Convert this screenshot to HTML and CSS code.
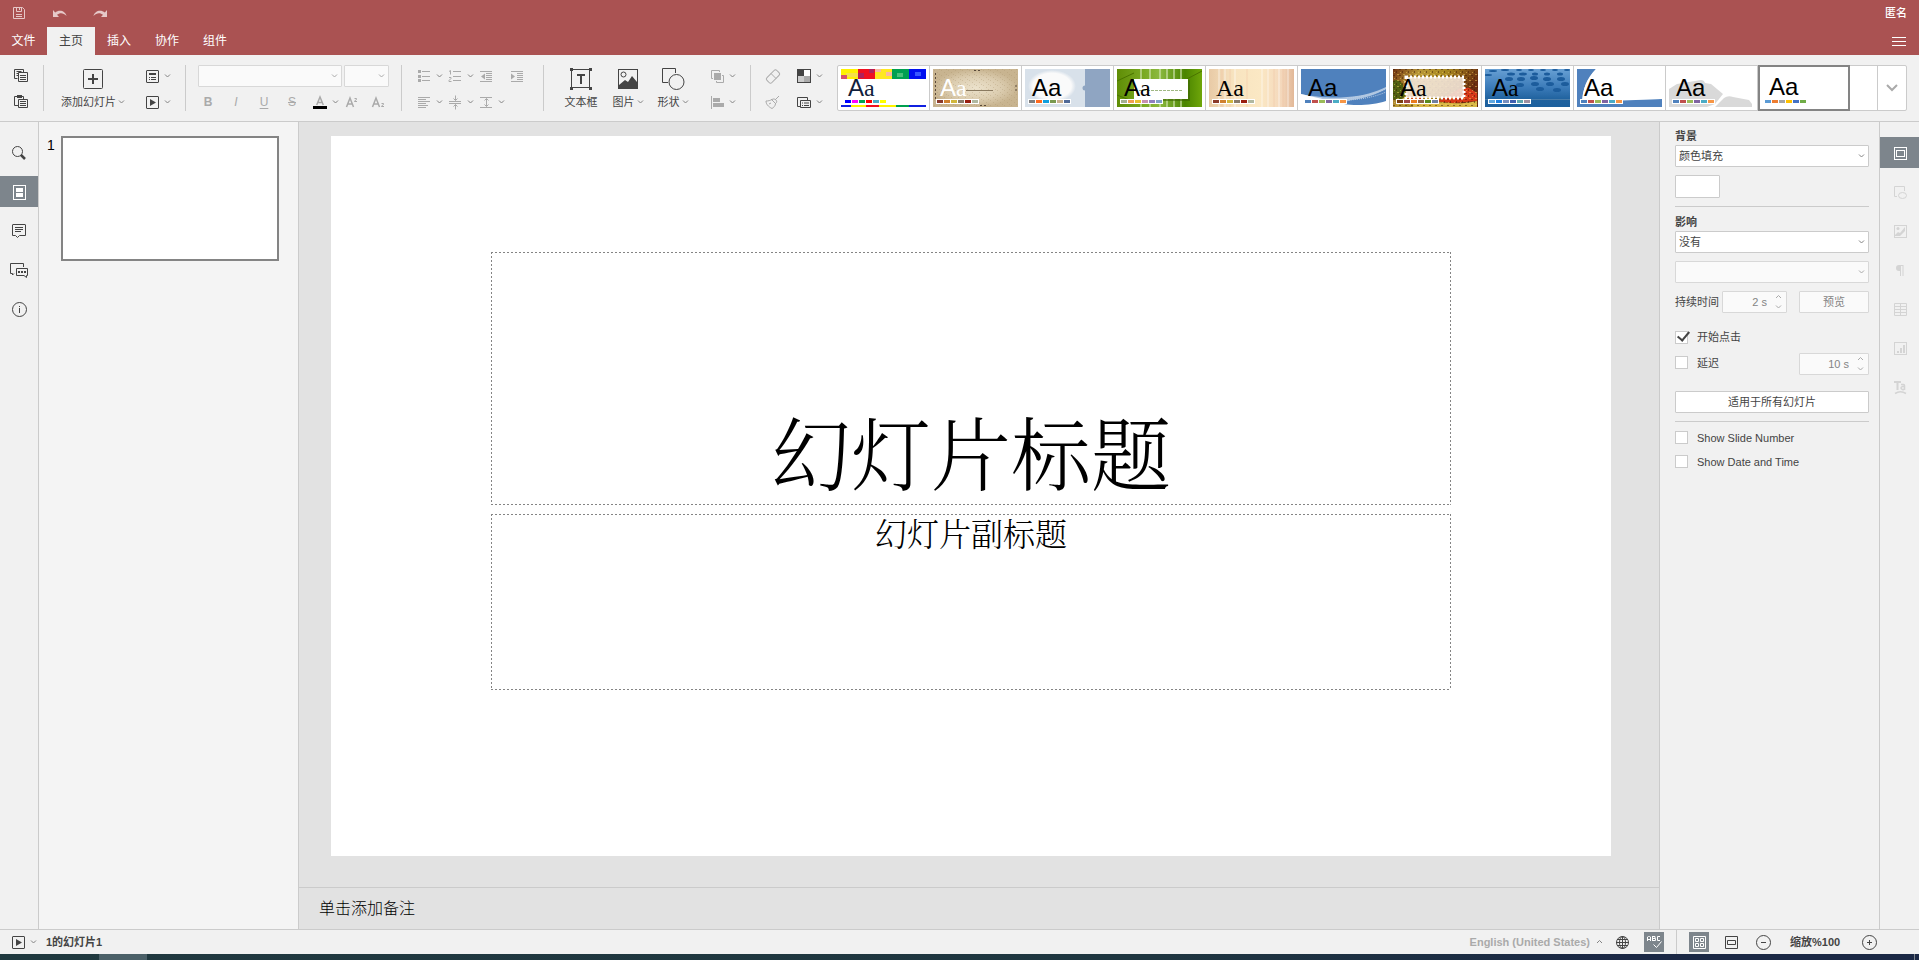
FILE: index.html
```html
<!DOCTYPE html>
<html lang="zh-CN">
<head>
<meta charset="utf-8">
<title>演示文稿</title>
<link rel="stylesheet" href="styles.css">
</head>
<body>
<svg class="defs" aria-hidden="true">
  <symbol id="caret" viewBox="0 0 7 6"><path d="M1 1.500L3.500 4 6 1.500" fill="none" stroke="currentColor"/></symbol>
  <symbol id="caret-up" viewBox="0 0 7 6"><path d="M1 4l2.500-2.500L6 4" fill="none" stroke="currentColor"/></symbol>
  <symbol id="play" viewBox="0 0 20 20"><rect x="4.500" y="4.500" width="12" height="12" rx="0.500" fill="none" stroke="currentColor"/><path d="M8 7v7l6-3.500z" fill="currentColor"/></symbol>
</svg>

<header class="header">
  <div class="quick">
    <button class="quick-btn" aria-label="保存"><svg width="16" height="16"><path d="M2.500 2.500h9l2 2v9h-11zM5.500 2.500v4h5v-4M8.500 3v2M5 9.500h6M5 11.500h6" fill="none" stroke="currentColor"/></svg></button>
    <button class="quick-btn" aria-label="撤消"><svg width="16" height="16"><path d="M1 5v7h6L5 9.800c3-2.500 6.500-2 9.500 1.200C13.500 6 7.500 4 3.200 7.400z" fill="currentColor"/></svg></button>
    <button class="quick-btn" aria-label="重做"><svg width="16" height="16"><path d="M14 5v7H8l2-2.200C7 7.300 3.500 7.800.5 11 1.500 6 7.500 4 11.800 7.400z" fill="currentColor"/></svg></button>
    <span class="user">匿名</span>
  </div>
  <nav class="tabs">
    <button class="tab">文件</button>
    <button class="tab tab-active">主页</button>
    <button class="tab">插入</button>
    <button class="tab">协作</button>
    <button class="tab">组件</button>
    <button class="menu-btn" aria-label="视图设置"><svg width="14" height="10"><path d="M0 .5h14M0 4.500h14M0 8.500h14" stroke="currentColor"/></svg></button>
  </nav>
</header>

<div class="toolbar">
  <div class="group group-clip">
    <div class="rows">
      <button class="tool" aria-label="复制"><svg class="ico"><path d="M6.500 12.500h-3v-9h9v3M5.500 5.500h5M5.500 7.500h2M5.500 9.500h2" fill="none" stroke="currentColor"/><path d="M7.500 6.500h9v9h-9zM9 9.500h6M9 11.500h6M9 13.500h6" fill="none" stroke="currentColor"/></svg></button>
      <button class="tool" aria-label="粘贴"><svg class="ico"><path d="M7 13.500H3.500v-9h9V7" fill="none" stroke="currentColor"/><path d="M6 3h5v3H6z" fill="currentColor"/><path d="M7.500 7.500h9v8h-9zM9 9.500h6M9 11.500h6M9 13.500h6" fill="none" stroke="currentColor"/></svg></button>
    </div>
  </div>
  <div class="group group-slide">
    <button class="big big-add"><svg width="24" height="24"><rect x="2.500" y="2.500" width="19" height="19" rx="1" fill="none" stroke="currentColor"/><path d="M12 7v10M7 12h10" stroke="currentColor" stroke-width="2"/></svg><span class="big-label">添加幻灯片<svg class="caret"><use href="#caret"/></svg></span></button>
    <div class="rows">
      <button class="tool" aria-label="更改布局"><svg class="ico"><rect x="4.500" y="4.500" width="12" height="12" rx="0.500" fill="none" stroke="currentColor"/><path d="M7 8h7" stroke="currentColor" stroke-width="2"/><path d="M7 11.500h1M9 11.500h5M7 13.500h1M9 13.500h5" stroke="currentColor"/></svg><svg class="caret"><use href="#caret"/></svg></button>
      <button class="tool" aria-label="开始幻灯片放映"><svg class="ico"><use href="#play"/></svg><svg class="caret"><use href="#caret"/></svg></button>
    </div>
  </div>
  <div class="group group-font">
    <div class="rows">
      <div class="font-row">
        <div class="combo combo-font"><select disabled aria-label="字体"><option></option></select><svg class="caret"><use href="#caret"/></svg></div>
        <div class="combo combo-size"><select disabled aria-label="字体大小"><option></option></select><svg class="caret"><use href="#caret"/></svg></div>
      </div>
      <div class="style-row off">
        <button class="tool glyph glyph-b" disabled>B</button>
        <button class="tool glyph glyph-i" disabled>I</button>
        <button class="tool glyph glyph-u" disabled>U</button>
        <button class="tool glyph glyph-s" disabled>S</button>
        <button class="tool" disabled aria-label="字体颜色"><svg class="ico"><path d="M6.700 13l3.300-8 3.300 8M8 10.500h4" fill="none" stroke="currentColor" stroke-width="1.500"/><path d="M3 14h14v3H3z" fill="#000"/></svg><svg class="caret"><use href="#caret"/></svg></button>
        <button class="tool" disabled aria-label="上标"><svg class="ico"><path d="M4.500 15l3.500-9 3.500 9M6 12h4" fill="none" stroke="currentColor" stroke-width="1.500"/><path d="M12.500 6.500h2v1l-2 1.500v.5h2.500" fill="none" stroke="currentColor"/></svg></button>
        <button class="tool" disabled aria-label="下标"><svg class="ico"><path d="M3.500 15L7 6l3.500 9M5 12h4" fill="none" stroke="currentColor" stroke-width="1.500"/><path d="M12.500 11.500h2v1l-2 1.500v.5h2.500" fill="none" stroke="currentColor"/></svg></button>
      </div>
    </div>
  </div>
  <div class="group group-para off">
    <div class="rows">
      <div class="row">
        <button class="tool" disabled aria-label="项目符号"><svg class="ico"><path d="M4 4h3v3H4zM4 9h3v3H4zM4 13h3v3H4z" fill="currentColor"/><path d="M8 5.500h8M8 10.500h8M8 14.500h8" stroke="currentColor"/></svg><svg class="caret"><use href="#caret"/></svg></button>
        <button class="tool" disabled aria-label="编号"><svg class="ico"><path d="M4 5.500l1.500-1v4M4 11.500h2v1l-2 2v1h2.500" fill="none" stroke="currentColor"/><path d="M8 5.500h8M8 10.500h8M8 14.500h8" stroke="currentColor"/></svg><svg class="caret"><use href="#caret"/></svg></button>
        <button class="tool tool-wide" disabled aria-label="减少缩进"><svg class="ico"><path d="M4 5.500h12M10 7.500h6M10 9.500h6M10 11.500h6M10 13.500h6M4 15.500h12" stroke="currentColor"/><path d="M5 10.500l4-3v6z" fill="currentColor"/></svg></button>
        <button class="tool" disabled aria-label="增加缩进"><svg class="ico"><path d="M4 5.500h12M10 7.500h6M10 9.500h6M10 11.500h6M10 13.500h6M4 15.500h12" stroke="currentColor"/><path d="M8 10.500l-4-3v6z" fill="currentColor"/></svg></button>
      </div>
      <div class="row">
        <button class="tool" disabled aria-label="水平对齐"><svg class="ico"><path d="M4 5.500h12M4 7.500h8M4 9.500h12M4 11.500h8M4 13.500h10M4 15.500h8" stroke="currentColor"/></svg><svg class="caret"><use href="#caret"/></svg></button>
        <button class="tool" disabled aria-label="垂直对齐"><svg class="ico"><path d="M4 9.500h12M4 11.500h12M10.500 3.500v5M8.500 6.500l2 2 2-2M10.500 17.500v-5M8.500 14.500l2-2 2 2" fill="none" stroke="currentColor"/></svg><svg class="caret"><use href="#caret"/></svg></button>
        <button class="tool" disabled aria-label="行间距"><svg class="ico"><path d="M4 5.500h12M4 15.500h12M10.500 6.500v8M8.500 8.500l2-2 2 2M8.500 12.500l2 2 2-2" fill="none" stroke="currentColor"/></svg><svg class="caret"><use href="#caret"/></svg></button>
      </div>
    </div>
  </div>
  <div class="group group-insert">
    <button class="big big-text"><svg width="24" height="24"><rect x="2.500" y="2.500" width="18" height="18" fill="none" stroke="currentColor"/><path d="M1 1h3v3H1zM20 1h3v3h-3zM1 20h3v3H1zM20 20h3v3h-3z" fill="currentColor"/><path d="M8 8h8M12 8v9" stroke="currentColor" stroke-width="2"/></svg><span class="big-label">文本框</span></button>
    <button class="big big-image"><svg width="24" height="24"><rect x="2.500" y="2.500" width="19" height="19" fill="none" stroke="currentColor"/><circle cx="7.500" cy="7.500" r="2.500" fill="none" stroke="currentColor"/><path d="M3 21v-3l6-5 3 2 4-6 5 6v6z" fill="currentColor"/></svg><span class="big-label">图片<svg class="caret"><use href="#caret"/></svg></span></button>
    <button class="big big-shape"><svg width="24" height="24"><path d="M7 15.500H1.500v-14h13V6" fill="none" stroke="currentColor"/><circle cx="15.500" cy="15" r="7.500" fill="none" stroke="currentColor"/></svg><span class="big-label">形状<svg class="caret"><use href="#caret"/></svg></span></button>
    <div class="rows off">
      <button class="tool" disabled aria-label="排列形状"><svg class="ico"><path d="M7 7h7v7H7z" fill="currentColor"/><path d="M6 12.500H4.500v-8h8V6M9.500 15v1.500h7v-7H15" fill="none" stroke="currentColor"/></svg><svg class="caret"><use href="#caret"/></svg></button>
      <button class="tool" disabled aria-label="对齐形状"><svg class="ico"><path d="M4.500 4v13" stroke="currentColor"/><path d="M6 6h7v4H6zM6 11h11v4H6z" fill="currentColor"/></svg><svg class="caret"><use href="#caret"/></svg></button>
    </div>
  </div>
  <div class="group group-style">
    <div class="rows off">
      <button class="tool tool-wide" disabled aria-label="清除样式"><svg class="ico"><rect x="3" y="7" width="14" height="7" rx="2" transform="rotate(-45 10 10.500)" fill="none" stroke="currentColor"/><path d="M8 7.500l5 5" stroke="currentColor"/></svg></button>
      <button class="tool tool-wide" disabled aria-label="复制样式"><svg class="ico"><path d="M16 4l-4 4M8 7l5 5M9 7.500c-2 1-3.500 1.500-6 1.500 0 3 2 5.500 6 7.500 1.500-1 3.500-2.500 3.500-5 1.500-1 1.500-2.500.5-3.500s-2.500-1.500-4-.5zM6 12l2-1" fill="none" stroke="currentColor"/></svg></button>
    </div>
    <div class="rows">
      <button class="tool" aria-label="更改配色方案"><svg class="ico"><path d="M4 4h6v6H4z" fill="currentColor"/><path d="M4 10h6v6H4z" fill="#ccc"/><path d="M10 10h6v6h-6z" fill="#aaa"/><path d="M10 4h6v6h-6z" fill="#fff"/><rect x="3.500" y="3.500" width="13" height="13" fill="none" stroke="currentColor"/></svg><svg class="caret"><use href="#caret"/></svg></button>
      <button class="tool" aria-label="选择幻灯片大小"><svg class="ico"><path d="M6 14.500H3.500v-9h10V8" fill="none" stroke="currentColor"/><path d="M6.500 8.500h10v7h-10zM8 11h1M10 11h5M8 13.500h1M10 13.500h5" fill="none" stroke="currentColor"/></svg><svg class="caret"><use href="#caret"/></svg></button>
    </div>
  </div>

  <div class="gallery">
    <button class="theme" aria-label="主题 1"><svg class="theme-pic" viewBox="0 0 85 38">
      <path d="M0 0h17v10H0z" fill="#fff200"/><path d="M5 4h12v4H5z" fill="#f6e04a"/><path d="M0 6h6v4H0z" fill="#d8506a"/><path d="M17 0h17v10H17z" fill="#f01020"/><path d="M17 4h6v5h-6zM28 0h5v4h-5z" fill="#b0205a"/><path d="M34 0h17v10H34z" fill="#ffe820"/><path d="M34 0h6v3h-6zM45 3h6v4h-6z" fill="#f9b8a0"/><path d="M51 0h17v10H51z" fill="#00a050"/><path d="M56 4h6v4h-6z" fill="#48c078"/><path d="M68 0h17v10H68z" fill="#0010f0"/><path d="M74 3h6v4h-6z" fill="#3858ff"/>
      <path d="M0 36h10v2H0zM68 36h17v2H68z" fill="#1020e0"/><path d="M10 36h15v2H10zM38 36h17v2H38z" fill="#fff200"/><path d="M25 36h13v2H25z" fill="#f01020"/><path d="M55 36h13v2H55z" fill="#00a050"/>
      <text class="aa" x="7" y="27" fill="#10203c">A<tspan class="aa-serif">a</tspan></text>
      <path d="M4 31h6v3H4z" fill="#00f"/><path d="M11 31h6v3h-6z" fill="#f0f"/><path d="M18 31h6v3h-6z" fill="#00a650"/><path d="M25 31h6v3h-6z" fill="red"/><path d="M32 31h6v3h-6z" fill="#4bacc6"/><path d="M39 31h6v3h-6z" fill="#ff0"/></svg></button>
    <button class="theme" aria-label="主题 2"><svg class="theme-pic" viewBox="0 0 85 38">
      <defs><radialGradient id="paper"><stop offset="0" stop-color="#ece2cc"/><stop offset=".6" stop-color="#dccdb0"/><stop offset="1" stop-color="#c8b490"/></radialGradient><pattern id="grain" width="7" height="5" patternUnits="userSpaceOnUse"><path d="M1 1h1v1H1zM4 3h1v1H4zM6 0h1v1H6z" fill="#a89068" opacity=".3"/></pattern></defs>
      <path d="M0 0h85v38H0z" fill="url(#paper)"/><path d="M0 0h85v38H0z" fill="url(#grain)"/><path d="M33 21.500h27" stroke="#8a7a60"/><path d="M41 1.500h8M47 36.500h8M2.500 4v26M83 16v7" stroke="#5a4a3a" stroke-dasharray="2 2"/>
      <text class="aa" x="7" y="27" fill="#fff">A<tspan class="aa-serif">a</tspan></text><path d="M3 30h43v5H3z" fill="#fff"/>
      <path d="M4 31h6v3H4z" fill="#8b3a2b"/><path d="M11 31h6v3h-6z" fill="#d0812f"/><path d="M18 31h6v3h-6z" fill="#d1b73c"/><path d="M25 31h6v3h-6z" fill="#8a7c6a"/><path d="M32 31h6v3h-6z" fill="#9a1f10"/><path d="M39 31h6v3h-6z" fill="#b0b8a0"/></svg></button>
    <button class="theme" aria-label="主题 3"><svg class="theme-pic" viewBox="0 0 85 38">
      <defs><radialGradient id="glow"><stop offset=".8" stop-color="#fafafa"/><stop offset="1" stop-color="#d8e1ea"/></radialGradient></defs>
      <path d="M0 0h85v38H0z" fill="#d8e1ea"/><ellipse cx="27" cy="17" rx="24" ry="16" fill="url(#glow)"/><path d="M60 0h25v38H60z" fill="#8fa5c2"/><circle cx="60" cy="19" r="2.500" fill="#8fa5c2"/>
      <text class="aa" x="7" y="27">Aa</text><path d="M3 30h43v5H3z" fill="#fff"/>
      <path d="M4 31h6v3H4z" fill="#7f7f7f"/><path d="M11 31h6v3h-6z" fill="#ff6a20"/><path d="M18 31h6v3h-6z" fill="#109fdf"/><path d="M25 31h6v3h-6z" fill="#7a9a50"/><path d="M32 31h6v3h-6z" fill="#c8b090"/><path d="M39 31h6v3h-6z" fill="#506a98"/></svg></button>
    <button class="theme" aria-label="主题 4"><svg class="theme-pic" viewBox="0 0 85 38">
      <defs><linearGradient id="leaf"><stop offset="0" stop-color="#5f8d06"/><stop offset=".3" stop-color="#78a820"/><stop offset=".5" stop-color="#8cba40"/><stop offset=".8" stop-color="#4a8400"/><stop offset="1" stop-color="#6fa60a"/></linearGradient></defs>
      <path d="M0 0h85v38H0z" fill="url(#leaf)"/><path d="M24 0v38M33 0v38M43 0v38M50 0v38M57 0v38M64 0v38" stroke="#d4e6b4" stroke-width="2" opacity=".6"/><path d="M0 12l17-8M0 26l15 6M70 10l15-8" stroke="#4a7400" fill="none"/><path d="M17 10h54v20H17z" fill="#fff"/><path d="M71 11h2v21H22v-2h49z" fill="#3c6400" opacity=".6"/><path d="M18 21.500h48" stroke="#a0b884" stroke-dasharray="3 1"/>
      <text class="aa" x="7" y="27">A<tspan class="aa-serif">a</tspan></text><path d="M3 30h43v5H3z" fill="#fff"/>
      <path d="M4 31h6v3H4z" fill="#a4b090"/><path d="M11 31h6v3h-6z" fill="#f0a050"/><path d="M18 31h6v3h-6z" fill="#e8c030"/><path d="M25 31h6v3h-6z" fill="#c890b0"/><path d="M32 31h6v3h-6z" fill="#9080c0"/><path d="M39 31h6v3h-6z" fill="#80a0c8"/></svg></button>
    <button class="theme" aria-label="主题 5"><svg class="theme-pic" viewBox="0 0 85 38">
      <defs><linearGradient id="silk"><stop offset="0" stop-color="#e8caa6"/><stop offset=".3" stop-color="#f8e4c0"/><stop offset=".6" stop-color="#fbe8c4"/><stop offset=".85" stop-color="#f4d8bc"/><stop offset="1" stop-color="#e2b898"/></linearGradient></defs>
      <path d="M0 0h85v38H0z" fill="url(#silk)"/><path d="M10 0v38M16 0v38M26 0v38M53 0v38M59 0v38M70 0v38M79 0v38" stroke="#fff" stroke-width="2" opacity=".3"/><path d="M13 0v38M21 0v38M38 0v38M65 0v38M74 0v38" stroke="#f0b898" opacity=".35"/>
      <text class="aa aa-serif" x="7" y="27">Aa</text><path d="M3 30h43v5H3z" fill="#fff"/>
      <path d="M4 31h6v3H4z" fill="#8b3a2b"/><path d="M11 31h6v3h-6z" fill="#d0812f"/><path d="M18 31h6v3h-6z" fill="#d1b73c"/><path d="M25 31h6v3h-6z" fill="#8a7c6a"/><path d="M32 31h6v3h-6z" fill="#9a1f10"/><path d="M39 31h6v3h-6z" fill="#b0b8a0"/></svg></button>
    <button class="theme" aria-label="主题 6"><svg class="theme-pic" viewBox="0 0 85 38">
      <path d="M0 0h85v32c-12 4-30 5-42 3L0 25z" fill="#4f81bd"/><path d="M0 25c20 4 34 4 46 3 16-1 29-5 39-10v2c-9 5-20 9-34 11-4 1-6 1-8 4L0 30z" fill="#fff" opacity=".55"/><path d="M46 29c16-1 30-5 39-9M48 31c16-1 28-4 37-8" stroke="#b8cce4" fill="none" stroke-dasharray="1 1"/>
      <text class="aa" x="7" y="27">Aa</text><path d="M3 30h43v5H3z" fill="#fff"/>
      <path d="M4 31h6v3H4z" fill="#4f81bd"/><path d="M11 31h6v3h-6z" fill="#c0504d"/><path d="M18 31h6v3h-6z" fill="#9bbb59"/><path d="M25 31h6v3h-6z" fill="#8064a2"/><path d="M32 31h6v3h-6z" fill="#4bacc6"/><path d="M39 31h6v3h-6z" fill="#f79646"/></svg></button>
    <button class="theme" aria-label="主题 7"><svg class="theme-pic" viewBox="0 0 85 38">
      <defs><linearGradient id="autumn" x2="1" y2=".3"><stop offset="0" stop-color="#6e3010"/><stop offset=".3" stop-color="#b89838"/><stop offset=".6" stop-color="#a88820"/><stop offset="1" stop-color="#6a2c10"/></linearGradient><pattern id="speck" width="6" height="6" patternUnits="userSpaceOnUse"><path d="M0 0h2v1H0zM3 2h1v2H3z" fill="#401c08" opacity=".5"/><path d="M4 5h2v1H4zM1 3h1v1H1z" fill="#f0d060" opacity=".5"/></pattern></defs>
      <path d="M0 0h85v38H0z" fill="url(#autumn)"/><path d="M12 29c10-6 22 6 34 2s18-14 30-12l8 5v8L60 34z" fill="#d83818"/><path d="M20 34c20-4 40 4 64-2v6H20z" fill="#d8b848"/><path d="M0 12c6-3 10 2 12 10s-6 10-12 8z" fill="#506010"/><path d="M0 0h85v38H0z" fill="url(#speck)"/><path d="M13 8h58v21H13z" fill="#f2e4d8" opacity=".9"/><path d="M13 8h58v21H13z" fill="none" stroke="#fff" stroke-width="3" stroke-dasharray="2 2"/>
      <text class="aa" x="7" y="27">A<tspan class="aa-serif">a</tspan></text><path d="M3 30h43v5H3z" fill="#fff"/>
      <path d="M4 31h6v3H4z" fill="#7a4010"/><path d="M11 31h6v3h-6z" fill="#a04848"/><path d="M18 31h6v3h-6z" fill="#e87d20"/><path d="M25 31h6v3h-6z" fill="#906848"/><path d="M32 31h6v3h-6z" fill="#5a8a20"/><path d="M39 31h6v3h-6z" fill="#7080a0"/></svg></button>
    <button class="theme" aria-label="主题 8"><svg class="theme-pic" viewBox="0 0 85 38">
      <defs><linearGradient id="sea" x2="0" y2="1"><stop offset="0" stop-color="#68a0d4"/><stop offset=".5" stop-color="#3a7ab8"/><stop offset=".8" stop-color="#20629e"/><stop offset="1" stop-color="#1c609e"/></linearGradient></defs>
      <path d="M0 0h85v38H0z" fill="url(#sea)"/>
      <g fill="#1c5c9c"><ellipse cx="8" cy="2" rx="4" ry="1"/><ellipse cx="20" cy="1" rx="4" ry="1"/><ellipse cx="34" cy="1" rx="3" ry="1"/><ellipse cx="46" cy="1" rx="3" ry="1"/><ellipse cx="58" cy="1" rx="3" ry="1"/><ellipse cx="70" cy="1" rx="3" ry="1"/><ellipse cx="82" cy="1" rx="3" ry="1"/><ellipse cx="3" cy="6" rx="4" ry="1"/><ellipse cx="26" cy="5" rx="4" ry="1.500"/><ellipse cx="38" cy="5" rx="4" ry="1.500"/><ellipse cx="50" cy="5" rx="3" ry="1.500"/><ellipse cx="62" cy="5" rx="3" ry="1.500"/><ellipse cx="75" cy="5" rx="3" ry="1.500"/><ellipse cx="24" cy="10" rx="4" ry="2"/><ellipse cx="36" cy="10" rx="4" ry="2"/><ellipse cx="49" cy="9" rx="4" ry="2"/><ellipse cx="62" cy="10" rx="4" ry="2"/><ellipse cx="76" cy="10" rx="4" ry="2"/><ellipse cx="35" cy="16" rx="4" ry="2"/><ellipse cx="50" cy="15" rx="4" ry="2"/><ellipse cx="65" cy="15" rx="4" ry="2"/><ellipse cx="80" cy="15" rx="4" ry="2"/><ellipse cx="55" cy="20" rx="4" ry="2"/><ellipse cx="72" cy="21" rx="4" ry="2"/></g><path d="M0 30.500h85" stroke="#4a7ca8"/>
      <text class="aa" x="7" y="27">A<tspan class="aa-serif">a</tspan></text><path d="M3 30h43v5H3z" fill="#fff"/>
      <path d="M4 31h6v3H4z" fill="#60a8e0"/><path d="M11 31h6v3h-6z" fill="#2080e0"/><path d="M18 31h6v3h-6z" fill="#7890c0"/><path d="M25 31h6v3h-6z" fill="#4060b0"/><path d="M32 31h6v3h-6z" fill="#60a8b0"/><path d="M39 31h6v3h-6z" fill="#a090a0"/></svg></button>
    <button class="theme" aria-label="主题 9"><svg class="theme-pic" viewBox="0 0 85 38">
      <path d="M0 0h19C10 10 6 20 5 31l80-1v8H0z" fill="#4f81bd"/><path d="M19 0C10 9 5 20 6 33l79-3V0z" fill="#fff"/>
      <text class="aa" x="7" y="27">Aa</text><path d="M3 30h43v5H3z" fill="#fff"/>
      <path d="M4 31h6v3H4z" fill="#4f81bd"/><path d="M11 31h6v3h-6z" fill="#c0504d"/><path d="M18 31h6v3h-6z" fill="#9bbb59"/><path d="M25 31h6v3h-6z" fill="#8064a2"/><path d="M32 31h6v3h-6z" fill="#4bacc6"/><path d="M39 31h6v3h-6z" fill="#f79646"/></svg></button>
    <button class="theme" aria-label="主题 10"><svg class="theme-pic" viewBox="0 0 85 38">
      <path d="M0 20l8-5 24-4q3 0 4 3l6 1 12 10-8 10-8 3H0zM46 38l9-9q4-3 9-1l16 3 3 4v3z" fill="#d9d9d9"/>
      <text class="aa" x="7" y="27">Aa</text><path d="M3 30h43v5H3z" fill="#fff"/>
      <path d="M4 31h6v3H4z" fill="#4f81bd"/><path d="M11 31h6v3h-6z" fill="#c0504d"/><path d="M18 31h6v3h-6z" fill="#9bbb59"/><path d="M25 31h6v3h-6z" fill="#8064a2"/><path d="M32 31h6v3h-6z" fill="#4bacc6"/><path d="M39 31h6v3h-6z" fill="#f79646"/></svg></button>
    <button class="theme theme-active" aria-label="主题 11"><svg class="theme-pic" viewBox="0 0 85 38">
      <text class="aa" x="7" y="26">Aa</text>
      <path d="M3 31h6v3H3z" fill="#5b9bd5"/><path d="M10 31h6v3h-6z" fill="#ed7d31"/><path d="M17 31h6v3h-6z" fill="#a5a5a5"/><path d="M24 31h6v3h-6z" fill="#ffc000"/><path d="M31 31h6v3h-6z" fill="#4472c4"/><path d="M38 31h6v3h-6z" fill="#70ad47"/></svg></button>
    <button class="gallery-more" aria-label="更多主题"><svg width="12" height="8"><path d="M1 1l5 5 5-5" fill="none" stroke="currentColor" stroke-width="2"/></svg></button>
  </div>
</div>

<main class="workspace">
  <nav class="rail rail-left">
    <button class="rail-btn" aria-label="查找"><svg class="ico"><circle cx="8.500" cy="8.500" r="5" fill="none" stroke="currentColor"/><path d="M12 12l4 4" stroke="currentColor" stroke-width="2.500"/></svg></button>
    <button class="rail-btn rail-on" aria-label="幻灯片"><svg class="ico"><rect x="4.500" y="3.500" width="12" height="14" fill="none" stroke="currentColor"/><path d="M7 6h7v4H7zM7 11h7v4H7z" fill="currentColor"/></svg></button>
    <button class="rail-btn" aria-label="批注"><svg class="ico"><path d="M4 3.500h12q.5 0 .5.500v10.500h-6l-2 2-2-2h-3V4q0-.5.500-.5zM6 6.500h8M6 8.500h8M6 10.500h6" fill="none" stroke="currentColor"/></svg></button>
    <button class="rail-btn" aria-label="聊天"><svg class="ico"><path d="M14.500 7V3.500h-13v10h2v1.500l1.500-1.500M7.500 8.500h11v7h-1v2l-2.500-2H7.500z" fill="none" stroke="currentColor"/><path d="M9 11h2v2H9zM12 11h2v2h-2zM15 11h2v2h-2z" fill="currentColor"/></svg></button>
    <button class="rail-btn" aria-label="关于"><svg class="ico"><circle cx="10.500" cy="10.500" r="7" fill="none" stroke="currentColor"/><path d="M10.500 7v1M10.500 9v5" stroke="currentColor"/></svg></button>
  </nav>

  <aside class="thumbs">
    <span class="thumb-num">1</span>
    <div class="thumb"></div>
  </aside>

  <section class="editor">
    <div class="stage">
      <div class="slide">
        <div class="holder holder-title">幻灯片标题</div>
        <div class="holder holder-sub">幻灯片副标题</div>
      </div>
    </div>
    <div class="notes">单击添加备注</div>
  </section>

  <aside class="settings">
    <label class="heading" for="fill">背景</label>
    <div class="combo"><select id="fill"><option>颜色填充</option></select><svg class="caret"><use href="#caret"/></svg></div>
    <button class="swatch" aria-label="颜色"></button>
    <hr class="rule">
    <label class="heading" for="effect">影响</label>
    <div class="combo"><select id="effect"><option>没有</option></select><svg class="caret"><use href="#caret"/></svg></div>
    <div class="combo combo-variant"><select disabled aria-label="效果选项"><option></option></select><svg class="caret"><use href="#caret"/></svg></div>
    <div class="line line-duration">
      <label for="duration">持续时间</label>
      <span class="spin spin-duration"><input id="duration" value="2 s" disabled><span class="spin-arrows"><svg class="caret"><use href="#caret-up"/></svg><svg class="caret"><use href="#caret"/></svg></span></span>
      <button class="btn btn-preview" disabled>预览</button>
    </div>
    <label class="check check-first"><input type="checkbox" checked>开始点击</label>
    <div class="line line-delay">
      <label class="check"><input type="checkbox">延迟</label>
      <span class="spin spin-delay"><input aria-label="延迟时间" value="10 s" disabled><span class="spin-arrows"><svg class="caret"><use href="#caret-up"/></svg><svg class="caret"><use href="#caret"/></svg></span></span>
    </div>
    <button class="btn btn-all">适用于所有幻灯片</button>
    <hr class="rule rule-last">
    <label class="check"><input type="checkbox">Show Slide Number</label>
    <label class="check check-last"><input type="checkbox">Show Date and Time</label>
  </aside>

  <nav class="rail rail-right">
    <button class="rail-btn rail-on" aria-label="幻灯片设置"><svg class="ico"><rect x="4.500" y="4.500" width="12" height="12" fill="none" stroke="currentColor"/><rect x="6.500" y="7.500" width="8" height="6" fill="none" stroke="currentColor"/></svg></button>
    <button class="rail-btn" disabled aria-label="形状设置"><svg class="ico"><path d="M7 14.500H4.500v-10h10V9" fill="none" stroke="currentColor"/><ellipse cx="12.500" cy="13.500" rx="4" ry="3" fill="none" stroke="currentColor"/></svg></button>
    <button class="rail-btn" disabled aria-label="图像设置"><svg class="ico"><rect x="4.500" y="4.500" width="12" height="12" fill="none" stroke="currentColor"/><circle cx="8" cy="7.500" r="1.500" fill="currentColor"/><path d="M5 14l3-3 2 1 5-6v4l-5 5H5z" fill="currentColor"/></svg></button>
    <button class="rail-btn" disabled aria-label="段落设置"><svg class="ico"><path d="M13.500 5H9a3 3 0 000 6h1v5h1V6h1.500v10h1z" fill="currentColor"/></svg></button>
    <button class="rail-btn" disabled aria-label="表格设置"><svg class="ico"><path d="M4.500 4.500h12v12h-12zM4.500 7.500h12M4.500 10.500h12M4.500 13.500h12M10.500 4.500v12" fill="none" stroke="currentColor"/></svg></button>
    <button class="rail-btn" disabled aria-label="图表设置"><svg class="ico"><rect x="4.500" y="4.500" width="12" height="12" fill="none" stroke="currentColor"/><path d="M7 13h2v2H7zM10 10h2v5h-2zM13 7h2v8h-2z" fill="currentColor"/></svg></button>
    <button class="rail-btn" disabled aria-label="艺术字设置"><svg class="ico"><path d="M4 5h7M7.500 5v8" stroke="currentColor" stroke-width="2"/><path d="M11 7.500h2.500q1 0 1 1V13M14.500 9.500h-2q-1.500.5-1.500 1.500t1.500 1.500 2-1M5 16.500q5.500-3.500 11 0" fill="none" stroke="currentColor" stroke-width="1.500"/></svg></button>
  </nav>
</main>

<footer class="status">
  <button class="tool" aria-label="开始幻灯片放映"><svg class="ico"><use href="#play"/></svg><svg class="caret"><use href="#caret"/></svg></button>
  <span class="pages">1的幻灯片1</span>
  <button class="lang" disabled>English (United States)<svg class="caret"><use href="#caret-up"/></svg></button>
  <button class="status-btn btn-globe" aria-label="设置文档语言"><svg class="ico"><circle cx="10.500" cy="10.500" r="6" fill="none" stroke="currentColor"/><ellipse cx="10.500" cy="10.500" rx="3" ry="6" fill="none" stroke="currentColor"/><path d="M10.500 4v13M4 10.500h13M5 7.500h11M5 13.500h11" stroke="currentColor"/></svg></button>
  <button class="status-btn status-on btn-spell" aria-label="拼写检查"><svg class="ico"><path d="M3.500 9V5l1-.5h1l1 .5v4M3.500 7.500h3M8.500 4v5M8 4.500h3v2H9M9 6.500h2.500v2H8M16 4.500h-2.500v4H16M9.500 12.500l3 3 5-6" fill="none" stroke="currentColor"/></svg></button>
  <span class="status-sep"></span>
  <button class="status-btn status-on" aria-label="适合幻灯片"><svg class="ico"><path d="M4.500 4.500h12v12h-12zM6.500 6.500h3v3h-3zM11.500 6.500h3v3h-3zM6.500 11.500h3v3h-3zM11.500 11.500h3v3h-3z" fill="none" stroke="currentColor"/></svg></button>
  <button class="status-btn btn-fit" aria-label="适合宽度"><svg class="ico"><path d="M4.500 4.500h12v12h-12zM6.500 8.500h8v4h-8z" fill="none" stroke="currentColor"/></svg></button>
  <button class="status-btn btn-out" aria-label="缩小"><svg class="ico"><circle cx="10.500" cy="10.500" r="7" fill="none" stroke="currentColor"/><path d="M8 10.500h5" stroke="currentColor"/></svg></button>
  <span class="zoom">缩放%100</span>
  <button class="status-btn" aria-label="放大"><svg class="ico"><circle cx="10.500" cy="10.500" r="7" fill="none" stroke="currentColor"/><path d="M8 10.500h5M10.500 8v5" stroke="currentColor"/></svg></button>
</footer>
<div class="taskbar"><span class="taskbar-item"></span><span class="taskbar-edge"></span></div>
</body>
</html>
```

FILE: styles.css
```css
* { box-sizing: border-box; }

body {
  margin: 0;
  height: 100vh;
  display: flex;
  flex-direction: column;
  overflow: hidden;
  background: #f1f1f1;
  color: #444;
  font: 11px/16px "Liberation Sans", "Noto Sans CJK SC", sans-serif;
}

button, input, select { font: inherit; color: inherit; }

button {
  display: flex;
  align-items: center;
  padding: 0;
  border: 0;
  background: none;
}

svg { display: block; flex: none; }
.defs { position: absolute; width: 0; height: 0; }
.ico { width: 20px; height: 20px; }
.caret { width: 7px; height: 6px; color: #848484; }

/* Header */
.header { background: #aa5252; color: #fff; }
.quick { display: flex; align-items: center; height: 27px; padding: 0 12px 1px 11px; }
.quick-btn { width: 16px; margin-right: 25px; color: #e6c8c8; }
.user { margin-left: auto; font-weight: 500; }
.tabs { display: flex; height: 28px; }
.tab { justify-content: center; width: 48px; font-size: 12px; }
.tab:first-child { width: 47px; }
.tab-active { background: #f1f1f1; color: #444; }
.menu-btn { margin: 0 13px 0 auto; padding-top: 2px; }

/* Toolbar */
.toolbar { display: flex; align-items: flex-start; padding: 10px 12px 8px 0; border-bottom: 1px solid #cbcbcb; }
.group { display: flex; height: 46px; border-right: 1px solid #cbcbcb; margin-bottom: 2px; }
.group-clip { padding: 0 12px 0 11px; }
.group-slide { padding: 0 12px 0 10px; }
.group-font { padding: 0 12px; }
.group-para { padding: 0 16px 0 12px; }
.group-insert { padding: 0 12px 0 14px; }
.group-style { padding: 0 12px; border-right: 0; }
.rows { display: grid; grid-template-rows: 22px 22px; gap: 4px; height: 48px; }
.row { display: flex; }
.tool { height: 22px; }
.tool .caret { margin: 0 2px; }
.tool-wide { width: 31px; }
.off { color: #aaa; }
.big { flex-direction: column; gap: 4px; padding-top: 2px; }
.big-label { display: flex; align-items: center; gap: 2px; line-height: 14px; white-space: nowrap; }
.big-add { width: 78px; margin-right: 10px; }
.big-text { width: 46px; }
.big-image { width: 48px; }
.big-shape { width: 42px; margin-right: 13px; }
.font-row { display: flex; gap: 2px; }
.combo-font { width: 144px; }
.combo-size { width: 45px; }
.style-row { display: grid; grid-template-columns: 28px 28px 28px 28px 32px 27px 20px; }
.glyph { justify-content: center; width: 20px; font-size: 12px; }
.glyph-b { font-weight: bold; }
.glyph-i { font-style: italic; }
.glyph-u { text-decoration: underline; text-underline-offset: 2px; }
.glyph-s { text-decoration: line-through; }

/* Drop-downs */
.combo { display: grid; align-items: center; }
.combo > * { grid-area: 1 / 1; }
.combo .caret { justify-self: end; margin-right: 4px; pointer-events: none; }
.combo select {
  appearance: none;
  width: 100%;
  height: 22px;
  padding: 0 20px 0 3px;
  border: 1px solid #cbcbcb;
  border-radius: 1px;
  background: #fff;
  opacity: 1;
}
.combo select:disabled { background: #fafafa; border-color: #d8d8d8; }
.combo select:disabled + .caret { color: #aaa; }

/* Theme gallery */
.gallery { display: flex; flex: 1; min-width: 0; height: 46px; border: 1px solid #cbcbcb; border-radius: 2px; background: #fff; }
.theme { flex: none; justify-content: center; width: 92px; border-right: 1px solid #cbcbcb; }
.theme-active { margin: -1px 0; border: 2px solid #848484; }
.theme-pic { width: 85px; height: 38px; }
.aa { font-family: "Liberation Sans", sans-serif; font-size: 24px; }
.aa-serif { font-family: "Liberation Serif", serif; }
.gallery-more { justify-content: center; width: 29px; margin-left: auto; border-left: 1px solid #cbcbcb; color: #aaa; }

/* Workspace */
.workspace { display: flex; flex: 1; min-height: 0; }
.rail { display: flex; flex-direction: column; flex: none; gap: 8px; padding-top: 15px; }
.rail-left { width: 39px; border-right: 1px solid #cbcbcb; }
.rail-right { width: 40px; border-left: 1px solid #cbcbcb; }
.rail-btn { justify-content: center; height: 31px; padding-top: 1px; }
.rail-right .rail-btn { padding-left: 1px; }
.rail-btn:disabled { color: #d4d4d4; }
.rail .rail-on { background: #7d858c; color: #fff; }

.thumbs { display: flex; align-items: flex-start; flex: none; width: 260px; padding: 14px 19px 0 8px; border-right: 1px solid #cbcbcb; background: #f4f4f4; }
.thumb-num { width: 14px; font-size: 14px; line-height: 18px; color: #000; }
.thumb { flex: 1; height: 125px; border: 2px solid #848484; background: #fff; }

.editor { display: flex; flex-direction: column; flex: 1; min-width: 0; background: #e2e2e2; }
.stage { flex: 1; min-height: 0; padding: 14px 48px 0 32px; }
.slide {
  display: grid;
  grid-template-rows: 252fr 175fr;
  gap: 9px;
  aspect-ratio: 16 / 9;
  padding: 9.1% 12.5% 13%;
  background: #fff;
  color: #000;
  font-family: "SimSun", "Noto Serif CJK SC", "Noto Sans CJK SC", serif;
  font-weight: 300;
  text-align: center;
}
/* 2px-on, 2px-off outline drawn on each edge */
.holder {
  --dash: #848484 0 2px, transparent 2px 4px;
  background:
    repeating-linear-gradient(90deg, var(--dash)) top / 100% 1px no-repeat,
    repeating-linear-gradient(90deg, var(--dash)) bottom / 100% 1px no-repeat,
    repeating-linear-gradient(180deg, var(--dash)) left / 1px 100% no-repeat,
    repeating-linear-gradient(180deg, var(--dash)) right / 1px 100% no-repeat;
}
.holder-title { display: flex; align-items: flex-end; justify-content: center; padding-bottom: 5px; font-size: 80px; line-height: 100px; }
.holder-sub { font-size: 32px; line-height: 36px; }
.notes { height: 42px; padding-left: 20px; border-top: 1px solid #cbcbcb; color: #000; font-size: 16px; line-height: 42px; font-weight: 300; }

/* Settings panel */
.settings { display: flex; flex-direction: column; flex: none; width: 220px; padding: 6px 10px 0 15px; border-left: 1px solid #cbcbcb; }
.heading { margin-bottom: 1px; font-weight: bold; line-height: 16px; }
.swatch { width: 45px; height: 23px; margin-top: 8px; border: 1px solid #cbcbcb; border-radius: 1px; background: #fff; }
.rule { width: 100%; height: 1px; margin: 8px 0 7px; border: 0; background: #cbcbcb; }
.combo-variant { margin-top: 8px; }
.line { display: flex; align-items: center; margin-top: 8px; }
.line-duration { gap: 3px; }
.line-delay { align-items: flex-start; }
.btn { justify-content: center; height: 22px; border: 1px solid #cbcbcb; border-radius: 1px; background: #fff; }
.btn:disabled { border-color: #d8d8d8; background: #fafafa; color: #848484; }
.btn-preview { width: 70px; margin-left: auto; }
.btn-all { margin-top: 16px; }
.spin { display: flex; height: 22px; border: 1px solid #d8d8d8; border-radius: 1px; background: #fafafa; color: #848484; }
.spin input { flex: 1; min-width: 0; padding: 0; border: 0; background: none; text-align: right; }
.spin-arrows { display: flex; flex-direction: column; justify-content: space-between; padding: 2px 4px 2px 8px; }
.spin-arrows .caret { color: #aaa; }
.spin-duration { width: 65px; }
.spin-delay { width: 70px; margin-left: auto; }
.check { display: flex; align-items: center; gap: 9px; height: 17px; }
.check-first { height: 16px; margin-top: 16px; }
.check-last { margin-top: 7px; }
.line-delay .check { height: 19px; }
.check input { appearance: none; display: grid; width: 13px; height: 13px; margin: 0; border: 1px solid #cbcbcb; background: #fff; }
.check input:checked::before { content: ""; width: 5px; height: 10px; margin: -3px 0 0 4px; border: solid #444; border-width: 0 2px 2px 0; transform: rotate(40deg); }

/* Status bar */
.status { display: flex; align-items: center; height: 25px; padding: 0 40px 0 8px; border-top: 1px solid #cbcbcb; }
.pages { margin-left: 7px; font-weight: bold; }
.lang { gap: 6px; margin-left: auto; color: #aaa; font-weight: bold; }
.status-btn { justify-content: center; width: 20px; height: 20px; }
.status-on { background: #7d858c; color: #fff; }
.btn-globe { margin-left: 9px; }
.btn-spell { margin-left: 12px; }
.status-sep { align-self: stretch; width: 1px; margin: 0 12px; background: #cbcbcb; }
.btn-fit { margin-left: 12px; }
.btn-out { margin-left: 12px; }
.zoom { width: 52px; margin: 0 17px; font-weight: bold; white-space: nowrap; }

.taskbar { display: flex; justify-content: space-between; height: 6px; padding: 0 4px 0 99px; background: linear-gradient(90deg, #20393f, #1f3640 60%, #1b2845 85%); }
.taskbar-item { width: 48px; background: #4b6068; }
.taskbar-edge { width: 1px; background: #7d858c; }
```
